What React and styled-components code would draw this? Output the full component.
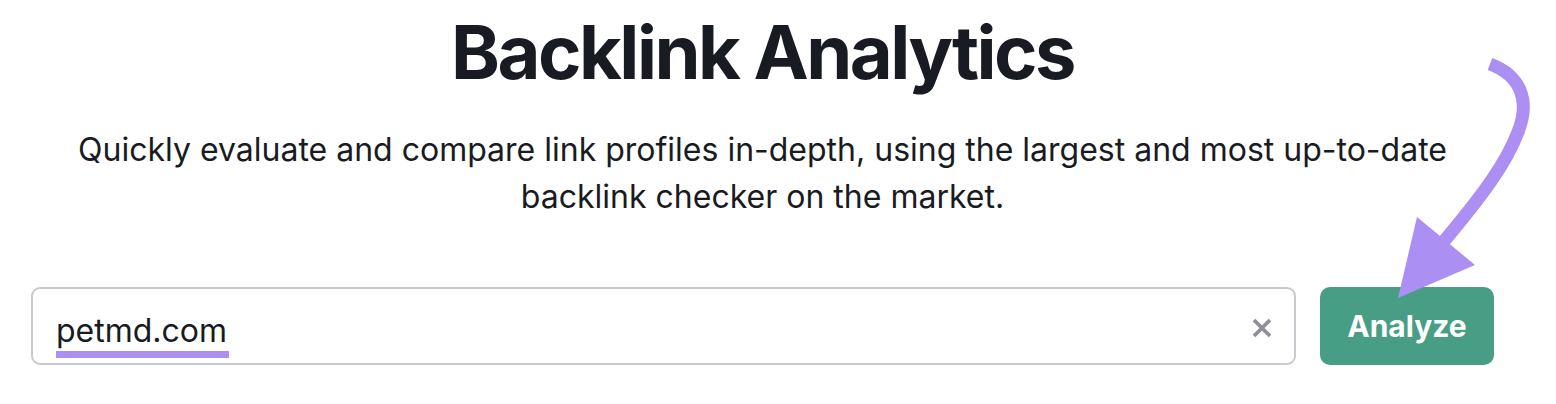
import React from 'react'
import styled, { createGlobalStyle } from 'styled-components'

const GlobalStyle = createGlobalStyle`
  html, body {
    margin: 0;
    padding: 0;
    background: #ffffff;
  }
  body {
    font-family: Inter, "Noto Sans", "Liberation Sans", sans-serif;
    color: #191b23;
  }
`

const Page = styled.div`
  position: relative;
  width: 1556px;
  height: 404px;
  overflow: hidden;
  background: #fff;
`

const Content = styled.div`
  width: 1463px;
  margin-left: 31px;
  display: flex;
  flex-direction: column;
  align-items: center;
`

const Title = styled.h1`
  margin: 6px 0 0;
  font-size: 74px;
  line-height: 92px;
  font-weight: 700;
  letter-spacing: -2.5px;
  color: #191b23;
`

const Subtitle = styled.p`
  margin: 28px 0 0;
  font-size: 32px;
  line-height: 47px;
  font-weight: 400;
  text-align: center;
  color: #191b23;
`

const SearchRow = styled.div`
  align-self: stretch;
  display: flex;
  gap: 24px;
  margin-top: 67px;
  height: 78px;
`

const InputBox = styled.div`
  flex: 1;
  display: flex;
  align-items: flex-start;
  justify-content: space-between;
  box-sizing: border-box;
  border: 2px solid #c7c9cf;
  border-radius: 9px;
  padding: 22px 20px 0 23px;
`

const Query = styled.span`
  display: inline-block;
  font-size: 32px;
  line-height: 40px;
  color: #191b23;
  border-bottom: 7px solid #ab8ff2;
  padding-right: 2px;
`

const ClearButton = styled.button`
  border: none;
  background: none;
  padding: 0;
  margin-top: 5px;
  width: 24px;
  height: 24px;
  display: flex;
  align-items: center;
  justify-content: center;
  cursor: pointer;
`

const AnalyzeButton = styled.button`
  width: 174px;
  height: 78px;
  border: none;
  border-radius: 10px;
  background: #479e84;
  color: #fff;
  font-family: Inter, "Noto Sans", "Liberation Sans", sans-serif;
  font-size: 30px;
  font-weight: 700;
  cursor: pointer;
`

const Overlay = styled.svg`
  position: absolute;
  left: 0;
  top: 0;
  pointer-events: none;
`

function App() {
  return (
    <Page>
      <GlobalStyle />
      <Content>
        <Title>Backlink Analytics</Title>
        <Subtitle>
          Quickly evaluate and compare link profiles in-depth, using the largest and most up-to-date
          <br />
          backlink checker on the market.
        </Subtitle>
        <SearchRow>
          <InputBox>
            <Query>petmd.com</Query>
            <ClearButton aria-label="Clear">
              <svg width="20" height="20" viewBox="0 0 20 20">
                <path d="M2 2 L18 18 M18 2 L2 18" stroke="#8e8f98" strokeWidth="3.8" />
              </svg>
            </ClearButton>
          </InputBox>
          <AnalyzeButton>Analyze</AnalyzeButton>
        </SearchRow>
      </Content>
      <Overlay width="1556" height="404" viewBox="0 0 1556 404">
        <path
          d="M1490 64 C1522 76 1530 102 1518 132 C1506 164 1482 196 1440 246"
          fill="none"
          stroke="#ab8ff2"
          strokeWidth="13"
        />
        <polygon points="1417,217 1475,265 1398,298" fill="#ab8ff2" />
      </Overlay>
    </Page>
  )
}

export default App
